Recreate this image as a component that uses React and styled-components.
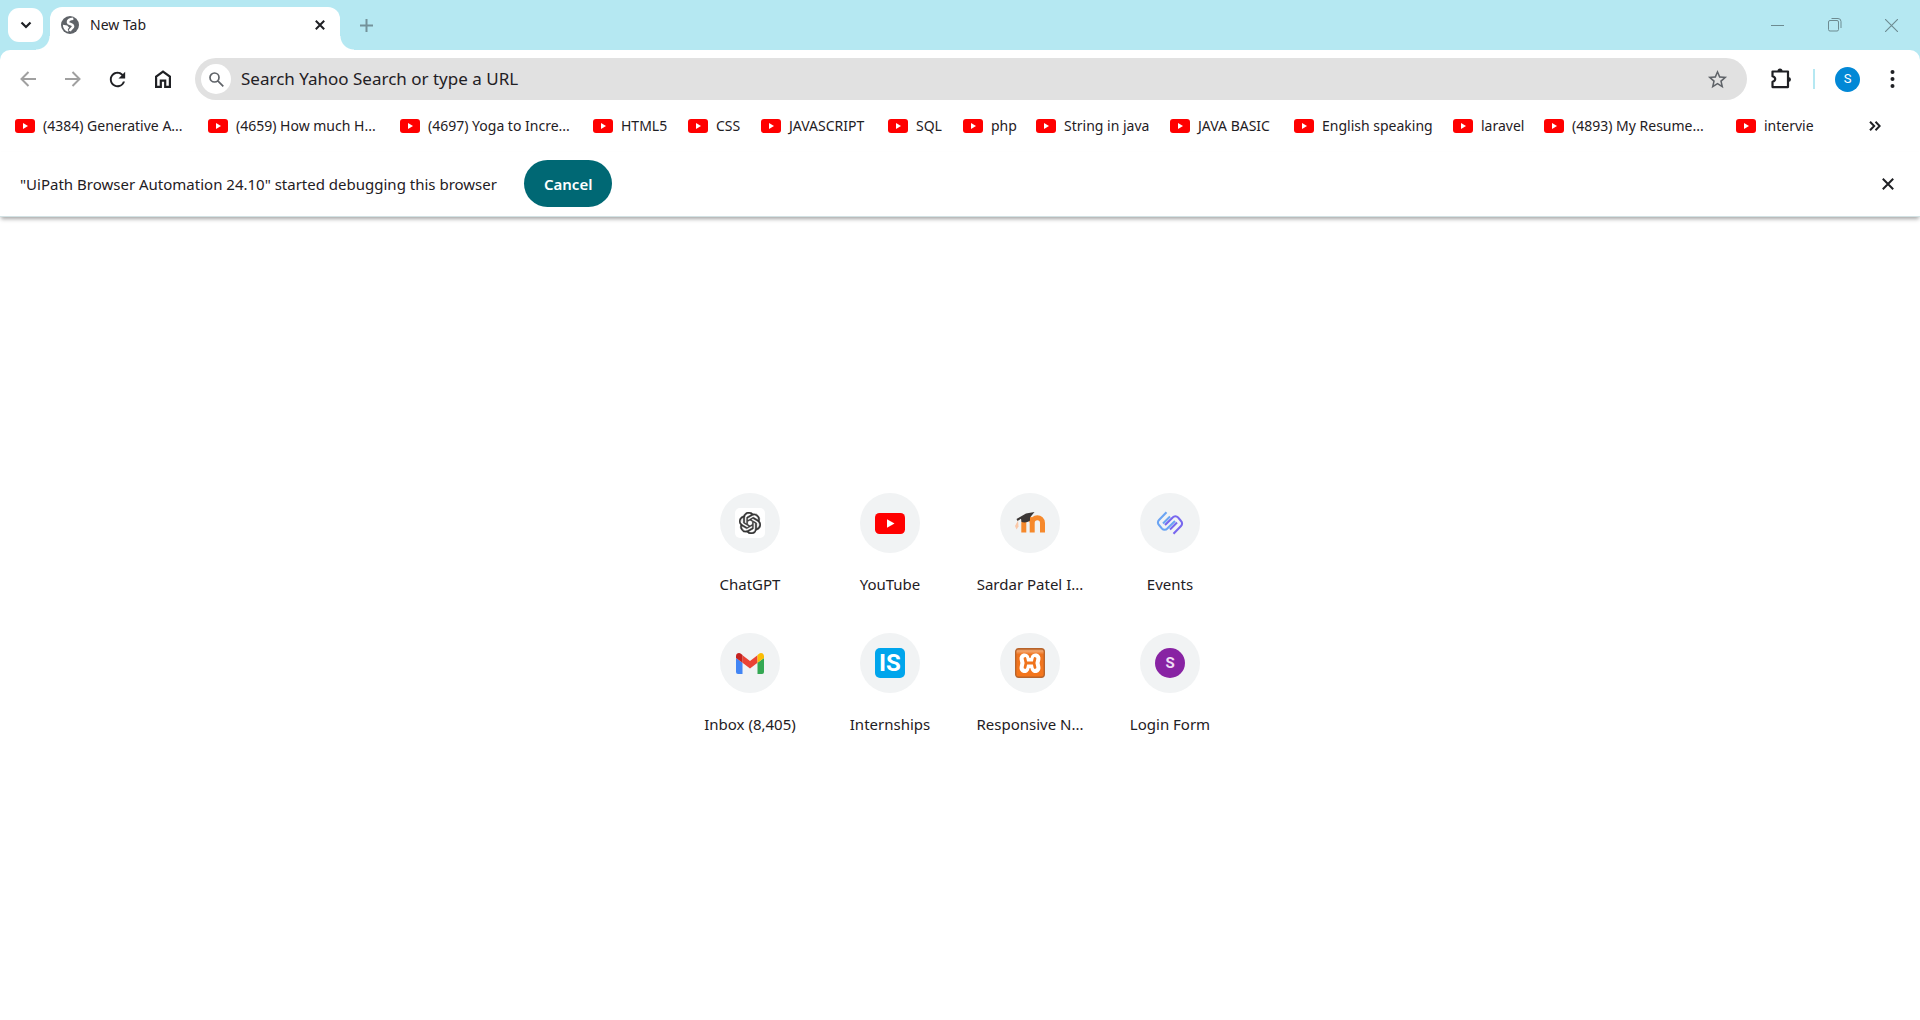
import React from 'react';
import styled, { createGlobalStyle } from 'styled-components';
import { SiOpenai } from 'react-icons/si';
import { MdStarBorder, MdRefresh } from 'react-icons/md';

const strip = '#b5e8f2';
const ink = '#1f2024';

const GlobalStyle = createGlobalStyle`
  * { box-sizing: border-box; }
  body {
    margin: 0;
    background: #fff;
    color: ${ink};
    font-family: "Noto Sans", "Open Sans", sans-serif;
    font-size: 15px;
    line-height: 20px;
  }
  button, input { font: inherit; color: inherit; }
  svg { display: block; }
`;

const Browser = styled.div`
  min-height: 100vh;
  display: flex;
  flex-direction: column;
`;

const IconButton = styled.button`
  width: ${(p) => p.$w || 45}px;
  height: ${(p) => p.$h || 42}px;
  padding: 0;
  border: 0;
  background: none;
  color: ${(p) => p.$color || ink};
  display: flex;
  align-items: center;
  justify-content: center;
  flex: none;
`;

const TabStrip = styled.header`
  display: flex;
  align-items: center;
  height: 50px;
  padding-left: 8px;
  background: ${strip};
`;

const TabSearch = styled(IconButton)`
  width: 35px;
  height: 34px;
  border-radius: 11px;
  background: #fff;
`;

const Tab = styled.div`
  position: relative;
  align-self: flex-end;
  display: flex;
  align-items: center;
  width: 290px;
  height: 43px;
  margin-left: 7px;
  padding: 0 5px 7px 11px;
  border-radius: 12px 12px 0 0;
  background: #fff;

  &::before,
  &::after {
    content: "";
    position: absolute;
    bottom: 0;
    width: 14px;
    height: 14px;
  }
  &::before {
    right: 100%;
    background: radial-gradient(circle at 0 0, transparent 13px, #fff 14px);
  }
  &::after {
    left: 100%;
    background: radial-gradient(circle at 100% 0, transparent 13px, #fff 14px);
  }
`;

const TabTitle = styled.span`
  flex: 1;
  margin-left: 11px;
  font-size: 14px;
`;

const WindowControls = styled.div`
  display: flex;
  margin-left: auto;
`;

const ToolbarBack = styled.div`
  background: ${strip};
`;

const Toolbar = styled.div`
  display: flex;
  align-items: center;
  padding: 8px 5px 0;
  border-radius: 10px 10px 0 0;
  background: #fff;
`;

const Omnibox = styled.label`
  flex: 1;
  display: flex;
  align-items: center;
  height: 42px;
  margin: 0 11px 0 10px;
  padding: 0 7px 0 6px;
  border-radius: 21px;
  background: #e1e1e1;
`;

const SearchBadge = styled.span`
  display: flex;
  align-items: center;
  justify-content: center;
  width: 30px;
  height: 30px;
  border-radius: 50%;
  background: #fff;
`;

const Address = styled.input`
  flex: 1;
  min-width: 0;
  margin-left: 10px;
  padding: 0;
  border: 0;
  outline: 0;
  background: none;
  font-size: 17px;
  line-height: 24px;
  &::placeholder { color: ${ink}; opacity: 1; }
`;

const Divider = styled.span`
  width: 2px;
  height: 20px;
  margin: 0 10px;
  background: ${strip};
`;

const Avatar = styled.span`
  display: flex;
  align-items: center;
  justify-content: center;
  width: 25px;
  height: 25px;
  border-radius: 50%;
  background: #0288d6;
  color: #fff;
  font: 13px/20px Roboto, sans-serif;
`;

const Bookmarks = styled.nav`
  display: flex;
  align-items: center;
  height: 52px;
  padding: 0 23px 0 15px;
`;

const Bookmark = styled.a`
  display: flex;
  align-items: center;
  gap: 8px;
  flex: 0 0 ${(p) => p.$w}px;
  color: inherit;
  font-size: 14px;
  text-decoration: none;
  white-space: nowrap;
`;

const Overflow = styled(IconButton)`
  margin-left: auto;
`;

const InfoBar = styled.section`
  display: flex;
  align-items: center;
  height: 65px;
  padding: 0 10px 1px 20px;
  border-bottom: 1px solid #d3e2e4;
  box-shadow: 0 3px 4px -1px rgba(0, 0, 0, 0.35);
`;

const Cancel = styled.button`
  height: 47px;
  margin-left: 27px;
  padding: 0 20px;
  border: 0;
  border-radius: 24px;
  background: #006874;
  color: #fff;
  font-weight: 600;
`;

const Dismiss = styled(IconButton)`
  margin-left: auto;
`;

const Page = styled.main`
  flex: 1;
  display: flex;
  justify-content: center;
  align-items: flex-start;
  padding: 276px 20px 40px;
`;

const Shortcuts = styled.div`
  display: grid;
  grid-template-columns: repeat(4, 140px);
  grid-auto-rows: 140px;
`;

const Shortcut = styled.a`
  display: flex;
  flex-direction: column;
  align-items: center;
  gap: 21px;
  color: inherit;
  text-decoration: none;
  white-space: nowrap;
`;

const Disc = styled.span`
  display: flex;
  align-items: center;
  justify-content: center;
  width: 60px;
  height: 60px;
  border-radius: 50%;
  background: #f1f3f4;
`;

const Tile = styled.span`
  display: flex;
  align-items: center;
  justify-content: center;
  width: 30px;
  height: 30px;
  border-radius: ${(p) => p.$radius || '5px'};
  background: ${(p) => p.$bg};
  color: ${(p) => p.$color || '#fff'};
  font-family: Roboto, sans-serif;
  font-size: ${(p) => p.$size || 24}px;
  font-weight: 700;
  line-height: 30px;
`;

const Line = ({ w = 16, h = w, sw = 2, d, ...rest }) => (
  <svg width={w} height={h} viewBox={`0 0 ${w} ${h}`} fill="none" stroke="currentColor" strokeWidth={sw} aria-hidden="true" {...rest}>
    <path d={d} />
  </svg>
);

const Globe = () => (
  <svg width="18" height="18" viewBox="0 0 18 18" aria-hidden="true">
    <circle cx="9" cy="9" r="9" fill="#5f6368" />
    <path d="M12.300 2.700C9.500 3 6.800 4.200 7 6.300c.2 2.200 4.700 1.400 5.100 3.800.2 1.900-2.300 2.300-3.300 4.900" fill="none" stroke="#fff" strokeWidth="2.600" />
    <path d="M1.900 8.800l4.300.6 2 2.300-1.400 1.400.6 2.800A7.200 7.200 0 0 1 1.900 8.800z" fill="#fff" />
  </svg>
);

const YouTube = ({ w = 20 }) => (
  <svg width={w} height={w * 0.7} viewBox="0 0 20 14" aria-hidden="true">
    <rect width="20" height="14" rx="3" fill="#f00" />
    <path d="M8 4.100v5.800L13 7z" fill="#fff" />
  </svg>
);

const Gmail = () => (
  <svg width="28" height="21" viewBox="0 0 28 21" aria-hidden="true">
    <path d="M0 5l6.500 4.800V21H2a2 2 0 0 1-2-2z" fill="#4285f4" />
    <path d="M28 5l-6.500 4.800V21H26a2 2 0 0 0 2-2z" fill="#34a853" />
    <path d="M6.500 2.300L14 8l7.500-5.700v7.500L14 15.400 6.500 9.800z" fill="#ea4335" />
    <path d="M0 3.200C0 .4 3-.9 5.200.9l1.300 1v7.900L0 5z" fill="#c5221f" />
    <path d="M28 3.200C28 .4 25-.9 22.800.9l-1.300 1v7.900L28 5z" fill="#fbbc04" />
  </svg>
);

const Moodle = () => (
  <svg width="30" height="22" viewBox="0 0 30 22" fill="none" aria-hidden="true">
    <path d="M8.800 20.500V11c0-6 8.400-6 8.400 0v9.500M17.200 11c0-7 10.300-7 10.300 0v9.500" stroke="#f6892c" strokeWidth="5" />
    <path d="M3 8.500L0 14l1.500 3.500 2-3z" fill="#fac8a8" />
    <path d="M1.500 7L11 1.500 19.500 0 15 5.500v3c-3 2.300-6 2.300-8.500 1.500L6 6.800 2.500 9z" fill="#3b3635" />
  </svg>
);

const eventStrand = 'M10.500 1.300L3 8.900a3.600 3.600 0 0 0 0 5.100l3 3.600a3.600 3.600 0 0 0 5.300 0L19 10M14 5.500L7 12.500';

const Events = () => (
  <svg width="28" height="24" viewBox="0 0 28 24" fill="none" strokeWidth="2.100" aria-hidden="true">
    <path d={eventStrand} stroke="#6ba4f3" />
    <path d={eventStrand} stroke="#7867ee" transform="rotate(180 14 12)" />
  </svg>
);

const Xampp = () => (
  <svg width="30" height="30" viewBox="0 0 30 30" fill="none" strokeLinecap="round" strokeLinejoin="round" aria-hidden="true">
    <defs>
      <linearGradient id="xampp" x2="0" y2="1">
        <stop offset="0" stopColor="#c9793f" />
        <stop offset=".08" stopColor="#f4a56c" />
        <stop offset=".2" stopColor="#ee7420" />
        <stop offset="1" stopColor="#f5761b" />
      </linearGradient>
    </defs>
    <rect x=".7" y=".7" width="28.600" height="28.600" rx="3" fill="url(#xampp)" stroke="#b8642b" strokeWidth="1.400" />
    <path d="M9.500 10.500l1 4.500-1 5M20.500 10.500l-1 4.500 1 5M11 15h8" stroke="#fff" strokeWidth="10" />
    <path d="M10 10.500l1 4.500-1 4.500M20 10.500L19 15l1 4.500M11 15h8" stroke="#f0741d" strokeWidth="2.800" />
  </svg>
);

const Puzzle = () => (
  <svg width="22" height="22" viewBox="0 0 22 22" aria-hidden="true">
    <path d="M3 3.500h15v15.600H2.500v-5.300c3.600-1 3.600-4.500 0-5.500V3.500z" fill="none" stroke="currentColor" strokeWidth="2.200" strokeLinejoin="round" />
    <path d="M7.500 3a2.500 2.500 0 0 1 5 0zM18.500 9a2.500 2.500 0 0 1 0 5z" fill="currentColor" />
  </svg>
);

const Dots = () => (
  <svg width="5" height="18" viewBox="0 0 5 18" fill="currentColor" aria-hidden="true">
    <circle cx="2.500" cy="2" r="2" />
    <circle cx="2.500" cy="9" r="2" />
    <circle cx="2.500" cy="16" r="2" />
  </svg>
);

const Restore = () => (
  <svg width="14" height="14" viewBox="0 0 14 14" fill="none" stroke="currentColor" aria-hidden="true">
    <rect x=".5" y="2.500" width="10" height="10.500" rx="1.500" />
    <path d="M3.500.5H10a3 3 0 0 1 3 3V10" />
  </svg>
);

const bookmarks = [
  ['(4384) Generative A...', 193],
  ['(4659) How much H...', 192],
  ['(4697) Yoga to Incre...', 193],
  ['HTML5', 95],
  ['CSS', 73],
  ['JAVASCRIPT', 127],
  ['SQL', 75],
  ['php', 73],
  ['String in java', 134],
  ['JAVA BASIC', 124],
  ['English speaking', 159],
  ['laravel', 91],
  ['(4893) My Resume...', 192],
  ['intervie', 80],
];

const shortcuts = [
  ['ChatGPT', <Tile $bg="#fff" $color="#333"><SiOpenai size={22} stroke="#333" strokeWidth=".5" /></Tile>],
  ['YouTube', <YouTube w={30} />],
  ['Sardar Patel I...', <Moodle />],
  ['Events', <Events />],
  ['Inbox (8,405)', <Gmail />],
  ['Internships', <Tile $bg="#00a5ec">IS</Tile>],
  ['Responsive N...', <Xampp />],
  ['Login Form', <Tile $bg="#8823a3" $radius="50%" $color="#f0dcf4" $size={15}>S</Tile>],
];

export default function App() {
  return (
    <Browser>
      <GlobalStyle />
      <TabStrip>
        <TabSearch aria-label="Search tabs">
          <Line w={12} h={8} sw={2.2} d="M1.500 1.500L6 6l4.500-4.500" />
        </TabSearch>
        <Tab>
          <Globe />
          <TabTitle>New Tab</TabTitle>
          <IconButton $w={30} $h={30} aria-label="Close tab">
            <Line w={10} d="M.8.8l8.400 8.400M9.200.8L.8 9.200" />
          </IconButton>
        </Tab>
        <IconButton $w={52} aria-label="New tab" $color="#74929a">
          <Line w={13} d="M6.500 0v13M0 6.500h13" />
        </IconButton>
        <WindowControls>
          <IconButton $w={57} aria-label="Minimize" $color="#6d8b91">
            <Line w={13} h={1} sw={1} d="M0 .5h13" />
          </IconButton>
          <IconButton $w={57} aria-label="Restore" $color="#6d8b91"><Restore /></IconButton>
          <IconButton $w={57} aria-label="Close" $color="#6d8b91">
            <Line w={13} sw={1.1} d="M0 0l13 13M13 0L0 13" />
          </IconButton>
        </WindowControls>
      </TabStrip>

      <ToolbarBack>
        <Toolbar>
          <IconButton aria-label="Back" $color="#a0a0a0">
            <Line w={16} d="M8.500 1L1.500 8l7 7M1.500 8H16" />
          </IconButton>
          <IconButton aria-label="Forward" $color="#a0a0a0">
            <Line w={16} d="M7.500 1l7 7-7 7M14.500 8H0" />
          </IconButton>
          <IconButton aria-label="Reload"><MdRefresh size={23} /></IconButton>
          <IconButton aria-label="Home">
            <Line w={16} h={18} sw={2.2} d="M1.100 6.600L8 1.500l6.900 5.100v10.300h-4.700v-6.300H5.800v6.300H1.100z" />
          </IconButton>
          <Omnibox>
            <SearchBadge>
              <Line w={15} sw={1.7} d="M10 5.500a4.500 4.500 0 1 1-9 0a4.500 4.500 0 0 1 9 0zM8.800 8.800l5.500 5.500" color="#5f6368" />
            </SearchBadge>
            <Address type="text" aria-label="Address" placeholder="Search Yahoo Search or type a URL" />
            <IconButton aria-label="Bookmark this tab" $color="#5f6368"><MdStarBorder size={23} /></IconButton>
          </Omnibox>
          <IconButton aria-label="Extensions"><Puzzle /></IconButton>
          <Divider />
          <IconButton aria-label="Profile"><Avatar>S</Avatar></IconButton>
          <IconButton aria-label="Menu"><Dots /></IconButton>
        </Toolbar>
      </ToolbarBack>

      <Bookmarks aria-label="Bookmarks">
        {bookmarks.map(([name, width]) => (
          <Bookmark key={name} href="#" $w={width}>
            <YouTube />
            {name}
          </Bookmark>
        ))}
        <Overflow aria-label="More bookmarks">
          <Line w={12} h={10} d="M1 .8L5.200 5 1 9.200M6.500.8L10.700 5 6.500 9.200" />
        </Overflow>
      </Bookmarks>

      <InfoBar>
        <span>"UiPath Browser Automation 24.10" started debugging this browser</span>
        <Cancel>Cancel</Cancel>
        <Dismiss aria-label="Dismiss">
          <Line w={12} d="M.8.8l10.400 10.400M11.200.8L.8 11.200" />
        </Dismiss>
      </InfoBar>

      <Page>
        <Shortcuts>
          {shortcuts.map(([name, icon]) => (
            <Shortcut key={name} href="#">
              <Disc>{icon}</Disc>
              {name}
            </Shortcut>
          ))}
        </Shortcuts>
      </Page>
    </Browser>
  );
}
